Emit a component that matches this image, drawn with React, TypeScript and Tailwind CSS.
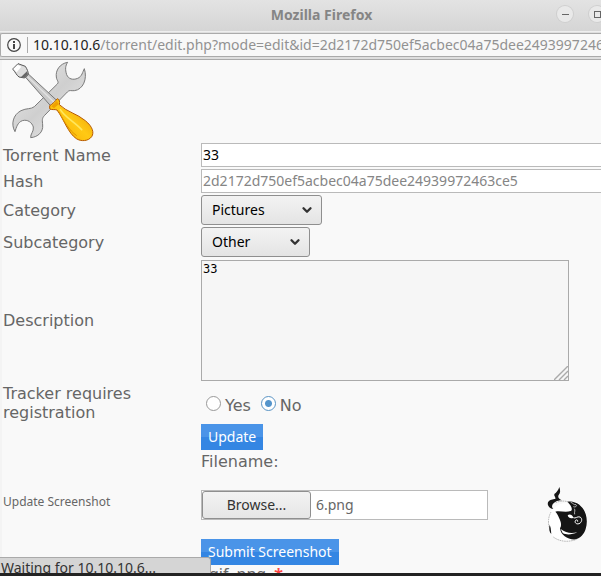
import { useRef, useState, type ReactNode } from 'react';
import { ChevronDown } from 'lucide-react';

const HASH = '2d2172d750ef5acbec04a75dee24939972463ce5';

function ToolsIcon() {
  return (
    <svg width="84" height="81" viewBox="36 18 252 243" aria-hidden="true">
      <defs>
        <linearGradient id="steel" x1="0" y1="0" x2="1" y2="1">
          <stop offset="0" stopColor="#eeeeee" />
          <stop offset="0.5" stopColor="#cfcfcf" />
          <stop offset="1" stopColor="#ececec" />
        </linearGradient>
        <linearGradient id="handle" x1="0" y1="1" x2="1" y2="0">
          <stop offset="0" stopColor="#f5a800" />
          <stop offset="0.5" stopColor="#ffc914" />
          <stop offset="1" stopColor="#e89400" />
        </linearGradient>
      </defs>
      <path
        d="M206 22C182 26 169 47 172 66C173 77 181 80 175 87L106 155C97 163 82 159 66 167C42 179 35 208 48 230C52 217 56 202 70 197C86 192 99 203 103 216C105 230 94 236 95 248C117 246 133 231 131 210C130 196 128 190 137 181L205 111C211 104 216 108 226 107C252 104 266 72 256 41C251 50 249 65 236 70C222 76 208 72 203 59C198 43 199 32 206 22Z"
        fill="url(#steel)"
        stroke="#7a7a7a"
        strokeWidth="3"
        strokeLinejoin="round"
      />
      <path d="M79 66L88 57L174 137L157 155Z" fill="#c9c9c9" stroke="#777777" strokeWidth="3" />
      <path d="M86 65L167 143" stroke="#e2e2e2" strokeWidth="4" />
      <path
        d="M41 42L57 26L79 34C84 42 88 50 88 58L77 69L60 66C52 60 49 51 41 42Z"
        fill="#dddddd"
        stroke="#555555"
        strokeWidth="3"
        strokeLinejoin="round"
      />
      <path d="M43 42L56 29L67 35L53 52Z" fill="#ffffff" />
      <path d="M66 66L84 49L87 58L77 68Z" fill="#666666" />
      <path
        d="M152 152C160 148 169 138 175 131C181 133 183 140 181 149C202 170 236 177 259 197C281 215 286 233 278 245C268 259 246 260 232 251C207 234 196 195 174 165C167 162 158 166 152 161Z"
        fill="url(#handle)"
        stroke="#b85a00"
        strokeWidth="3"
        strokeLinejoin="round"
      />
      <path d="M157 154L174 137L179 148L165 160Z" fill="#f0a000" />
      <path d="M184 164C198 187 224 199 248 224" fill="none" stroke="#ffe65e" strokeWidth="5" strokeLinecap="round" />
      <path d="M180 170C194 198 210 226 233 242" fill="none" stroke="#e09400" strokeWidth="3" />
    </svg>
  );
}

function OrcaLogo() {
  return (
    <svg width="44" height="58" viewBox="48 48 132 174" aria-hidden="true">
      <path d="M60 126C88 92 126 93 146 99C172 117 178 160 164 190C145 216 99 220 70 200C53 180 52 145 60 126Z" fill="#ffffff" />
      {/* Tail fluke */}
      <path
        d="M88 51C91 60 92 69 86 75C83 79 85 87 96 91C80 91 71 98 67 105C65 110 67 114 70 117C58 116 51 106 54 97C60 88 68 88 76 87C78 82 71 78 73 72C80 67 85 61 88 51Z"
        fill="#151515"
      />
      {/* Body */}
      <path
        d="M76 125C90 122 108 128 122 123C131 117 121 104 112 95C126 93 144 99 151 107C169 121 175 153 167 177C162 193 151 205 137 208C127 210 113 206 104 199C96 193 91 185 90 175C97 164 91 151 87 143C84 135 81 130 76 125Z"
        fill="#151515"
      />
      <path d="M113 136C119 131 127 135 130 143C123 148 115 143 113 136Z" fill="#ffffff" />
      <path
        d="M130 143C136 147 142 138 150 141C158 145 156 158 147 161C139 164 132 157 137 151C141 148 144 151 143 155"
        fill="none"
        stroke="#ffffff"
        strokeWidth="3"
      />
      <path d="M122 97C129 98 131 106 138 104C143 108 135 113 130 110M133 116C137 121 132 126 134 133" fill="none" stroke="#ffffff" strokeWidth="2" />
      <path d="M92 177C108 190 124 190 142 187C126 194 110 196 98 189Z" fill="#ffffff" />
      <path d="M77 98C91 92 105 92 116 96M63 126C54 142 54 160 58 172M70 201C90 216 116 217 140 208" fill="none" stroke="#999999" strokeWidth="2" strokeDasharray="5 2" />
      <path d="M59 164C56 176 58 187 64 192L62 174Z" fill="#151515" />
    </svg>
  );
}

function Row({ label, htmlFor, className = '', children }: {
  label?: string;
  htmlFor?: string;
  className?: string;
  children: ReactNode;
}) {
  return (
    <div className={`grid grid-cols-[198px_1fr] items-center ${className}`}>
      {label ? <label htmlFor={htmlFor} className="pr-8">{label}</label> : <span />}
      <div className="min-w-0">{children}</div>
    </div>
  );
}

function Dropdown({ id, options, className }: { id: string; options: string[]; className: string }) {
  return (
    <div className={`relative ${className}`}>
      <select
        id={id}
        className="block h-[30px] w-full appearance-none rounded-[3px] border border-[#8f8f8f] bg-linear-to-b from-[#f3f3f3] to-[#e4e4e4] pl-[10px] font-['Noto_Sans'] text-sm text-black"
      >
        {options.map(o => <option key={o}>{o}</option>)}
      </select>
      <ChevronDown className="pointer-events-none absolute top-2 right-2 text-[#333]" size={14} strokeWidth={4} />
    </div>
  );
}

const fieldClass = "block h-6 w-[440px] border border-[#bababa] bg-white px-px pb-px font-['Noto_Sans'] text-sm";
const buttonClass = "block h-[26px] bg-linear-to-b from-[#4a94e8] from-50% to-[#3486e3] to-50% px-[7px] font-['Noto_Sans'] text-sm text-white";
const radioClass = 'size-[15px] appearance-none rounded-full border border-[#999] bg-white checked:border-[#5a94c4] checked:bg-radial checked:from-[#5595cb] checked:from-[3px] checked:to-white checked:to-[4px]';

export default function App() {
  const fileRef = useRef<HTMLInputElement>(null);
  const [fileName, setFileName] = useState('6.png');

  return (
    <div className="relative flex h-screen flex-col overflow-hidden bg-[#f9f9f9] font-['DejaVu_Sans',sans-serif] text-base leading-[19px] text-[#666]">
      {/* Window title */}
      <header className="relative h-8 shrink-0 border-b border-[#eee] bg-linear-to-b from-[#e3e3e3] to-[#d5d5d5]">
        <h1 className="pt-[5px] pl-[42px] text-center font-['Noto_Sans'] text-sm leading-5 font-bold text-[#858585]">Mozilla Firefox</h1>
        <div className="absolute top-[6px] -right-1 flex gap-4">
          <button aria-label="Minimize" className="flex size-4 items-center justify-center rounded-full bg-[#e9e9e9] ring-1 ring-[#cfcfcf]">
            <span className="h-px w-[7px] bg-[#666]" />
          </button>
          <button aria-label="Maximize" className="flex size-4 items-center justify-center rounded-full bg-[#e9e9e9] ring-1 ring-[#cfcfcf]">
            <span className="size-[7px] border border-[#666]" />
          </button>
        </div>
      </header>

      {/* Address bar */}
      <div className="h-7 shrink-0 border-b border-[#aaa] bg-[#dedede] pt-px">
        <div className="flex h-6 items-center overflow-hidden rounded-l-[2px] border border-r-0 border-[#aaa] bg-[#f8f8f8] pl-[6px] font-['Noto_Sans'] text-sm whitespace-nowrap text-[#929292]">
          <svg className="shrink-0" width="14" height="14" viewBox="0 0 14 14" fill="none" stroke="#444" aria-hidden="true">
            <circle cx="7" cy="7" r="6.3" strokeWidth="1.2" />
            <path d="M7 6v5M7 3v2" strokeWidth="2" />
          </svg>
          <span className="mr-[5px] ml-[6px] h-4 w-px shrink-0 bg-[#aaa]" />
          <span className="text-[#222]">10.10.10.6</span>
          <span>/torrent/edit.php?mode=edit&amp;id={HASH}</span>
        </div>
      </div>

      <main className="min-h-0 flex-1 overflow-hidden border-l-2 border-[#f4f4f4] pt-px pl-px">
        <div className="mb-px pl-2"><ToolsIcon /></div>
        <form onSubmit={e => e.preventDefault()}>
          <Row label="Torrent Name" htmlFor="name" className="mb-[2px]">
            <input id="name" defaultValue="33" className={`${fieldClass} text-black`} />
          </Row>
          <Row label="Hash" htmlFor="hash" className="mb-[2px]">
            <input id="hash" value={HASH} disabled className={`${fieldClass} text-[#858585]`} />
          </Row>
          <Row label="Category" htmlFor="category" className="mb-[2px]">
            <Dropdown id="category" options={['Pictures']} className="w-[121px]" />
          </Row>
          <Row label="Subcategory" htmlFor="subcategory" className="mb-[3px]">
            <Dropdown id="subcategory" options={['Other']} className="w-[109px]" />
          </Row>
          <Row label="Description" htmlFor="description" className="mb-[3px]">
            <div className="relative w-[368px]">
              <textarea
                id="description"
                defaultValue="33"
                className="block h-[121px] w-full resize-none border border-[#aaa] bg-[#f6f6f6] px-px font-['DejaVu_Sans_Mono'] text-xs leading-4 text-black"
              />
              <svg className="absolute right-px bottom-px" width="14" height="14" viewBox="0 0 14 14" stroke="#aaa" aria-hidden="true">
                <path d="M0 14L14 0M5 14L14 5M10 14L14 10" strokeWidth="1.4" />
              </svg>
            </div>
          </Row>
          <Row label="Tracker requires registration" className="mb-[2px]">
            <div className="flex items-center pl-[5px]" role="radiogroup" aria-label="Tracker requires registration">
              <input id="yes" type="radio" name="registration" className={radioClass} />
              <label htmlFor="yes" className="mr-[10px] ml-1 pt-1">Yes</label>
              <input id="no" type="radio" name="registration" defaultChecked className={radioClass} />
              <label htmlFor="no" className="ml-1 pt-1">No</label>
            </div>
          </Row>
          <Row>
            <button type="submit" className={buttonClass}>Update</button>
            <p className="mt-[2px]">Filename:</p>
          </Row>
        </form>

        <form className="pt-[19px]" onSubmit={e => e.preventDefault()}>
          <div className="grid grid-cols-[198px_1fr]">
            <label htmlFor="screenshot" className="pt-[2px] font-['Noto_Sans'] text-xs leading-[19px]">Update Screenshot</label>
            <div>
              <div className="flex h-[30px] w-[287px] items-center border border-[#bababa] bg-white font-['Noto_Sans'] text-sm">
                <button
                  type="button"
                  onClick={() => fileRef.current?.click()}
                  className="h-7 w-[109px] rounded-[3px] border border-[#8f8f8f] bg-linear-to-b from-[#f3f3f3] to-[#e6e6e6] text-[#333]"
                >
                  Browse...
                </button>
                <span className="ml-[5px]">{fileName}</span>
                <input
                  ref={fileRef}
                  id="screenshot"
                  type="file"
                  className="hidden"
                  onChange={e => setFileName(e.target.files?.[0]?.name ?? '')}
                />
              </div>
              <button type="submit" className={`${buttonClass} mt-[19px]`}>Submit Screenshot</button>
              <p className="pl-2 font-['Noto_Sans']">gif, png <span className="ml-1 font-bold text-[#f44]">*</span></p>
            </div>
          </div>
        </form>
      </main>

      <footer className="h-[3px] shrink-0 bg-[#232323]" />

      <div className="absolute right-[11px] bottom-8"><OrcaLogo /></div>
      {/* Loading status */}
      <div className="absolute bottom-[3px] left-0 h-4 w-[211px] overflow-hidden rounded-tr-[3px] border-t border-r border-[#aaa] bg-[#d5d5d5] pl-px font-['Noto_Sans'] text-sm leading-5 text-[#333]">
        Waiting for 10.10.10.6...
      </div>
    </div>
  );
}
